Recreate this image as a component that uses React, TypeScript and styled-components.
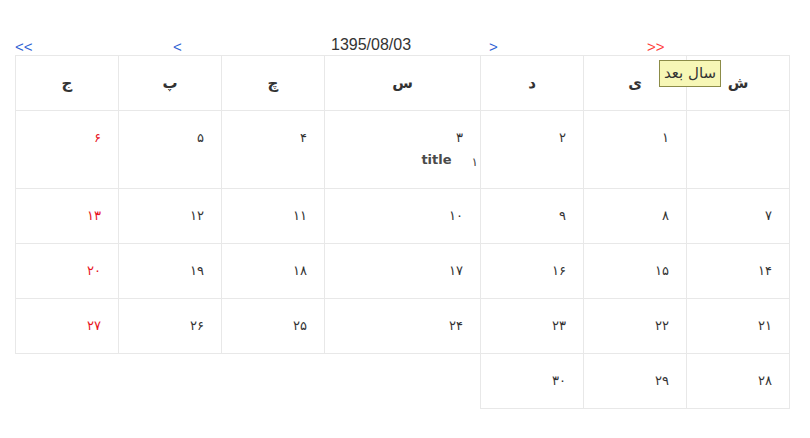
import React from 'react';
import styled, { createGlobalStyle } from 'styled-components';

const GlobalStyle = createGlobalStyle`
    body {
        margin: 0;
        background: #fff;
        font-family: "DejaVu Sans", sans-serif;
    }
`;

export const Page = styled.div`
    padding: 34px 0 0 15px;
    width: 774px;
`;

export const Nav = styled.div`
    direction: ltr;
    display: grid;
    grid-template-columns: repeat(5, 158px);
    align-items: start;
    height: 21px;
`;

export const NavLink = styled.span<{ $hot?: boolean }>`
    position: relative;
    padding-top: 4px;
    font-family: "Liberation Sans", Arial, sans-serif;
    font-size: 15px;
    line-height: 17px;
    color: ${p => (p.$hot ? '#ff3b3b' : '#2f62d4')};
    cursor: pointer;
`;

export const Current = styled.span`
    font-family: "Liberation Sans", Arial, sans-serif;
    font-size: 16px;
    line-height: 21px;
    color: #333;
`;

export const Tip = styled.span`
    position: absolute;
    left: 12px;
    top: 26px;
    direction: rtl;
    white-space: nowrap;
    font-family: "DejaVu Sans", sans-serif;
    font-size: 15px;
    line-height: 25px;
    color: #333;
    padding: 0 4px;
    background: #f7f7b6;
    border: 1px solid #8c8c48;
    z-index: 2;
`;

export const Table = styled.table`
    direction: rtl;
    border-collapse: collapse;
    table-layout: fixed;
    width: 774px;
`;

export const Head = styled.th`
    border: 1px solid #e8e8e8;
    height: 54px;
    padding: 0;
    font-size: 15px;
    font-weight: bold;
    color: #333;
    text-align: center;
`;

export const Cell = styled.td<{ $holiday?: boolean }>`
    border: 1px solid #e8e8e8;
    padding: 16px 17px;
    vertical-align: top;
    text-align: right;
    font-size: 13px;
    letter-spacing: 2px;
    line-height: 22px;
    color: ${p => (p.$holiday ? '#e8141e' : '#333')};
`;

export const Event = styled.div`
    display: flex;
    direction: rtl;
    align-items: baseline;
    gap: 20px;
    height: 23px;
    margin-right: -15px;
    font-size: 13px;
    font-weight: bold;
    letter-spacing: 0;
    line-height: 22px;
    color: #4a4a4a;
`;

export const EventCount = styled.span`
    font-size: 12px;
    font-weight: normal;
    color: #444;
    transform: translateY(2px);
`;

const days = ['ش', 'ی', 'د', 'س', 'چ', 'پ', 'ج'];
const widths = [103, 103, 103, 156, 103, 103, 103];

const fa = (n: number) => String(n).replace(/\d/g, d => '۰۱۲۳۴۵۶۷۸۹'[+d]);

const weeks: (number | null)[][] = [
    [null, 1, 2, 3, 4, 5, 6],
    [7, 8, 9, 10, 11, 12, 13],
    [14, 15, 16, 17, 18, 19, 20],
    [21, 22, 23, 24, 25, 26, 27],
    [28, 29, 30],
];

const App: React.FC = () => {
    return (
        <Page>
            <GlobalStyle />
            <Nav>
                <NavLink>&lt;&lt;</NavLink>
                <NavLink>&lt;</NavLink>
                <Current>1395/08/03</Current>
                <NavLink>&gt;</NavLink>
                <NavLink $hot>
                    &gt;&gt;
                    <Tip>سال بعد</Tip>
                </NavLink>
            </Nav>
            <Table>
                <colgroup>
                    {widths.map((w, i) => <col key={i} style={{ width: w }} />)}
                </colgroup>
                <thead>
                    <tr>
                        {days.map(d => <Head key={d}>{d}</Head>)}
                    </tr>
                </thead>
                <tbody>
                    {weeks.map((week, wi) => (
                        <tr key={wi}>
                            {week.map((day, di) => (
                                <Cell key={di} $holiday={di === 6}>
                                    {day !== null && fa(day)}
                                    {day === 3 && (
                                        <Event>
                                            <EventCount>۱</EventCount>
                                            <span>title</span>
                                        </Event>
                                    )}
                                </Cell>
                            ))}
                        </tr>
                    ))}
                </tbody>
            </Table>
        </Page>
    );
};

export default App;
